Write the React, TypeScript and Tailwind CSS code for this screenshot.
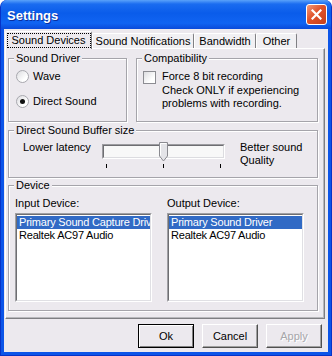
import React from 'react';

const BG = 'bg-[#ECE9EE]';

function Group({ label, className, children }: { label: string; className: string; children?: React.ReactNode }) {
  return (
    <div className={`relative border border-[#A5A4AA] shadow-[inset_1px_1px_0_#fff,1px_1px_0_#fff] ${className}`}>
      <span className={`absolute -top-[7px] left-[5px] px-[2px] leading-[13px] ${BG}`}>{label}</span>
      {children}
    </div>
  );
}

function Radio({ checked }: { checked?: boolean }) {
  return (
    <div className="w-[13px] h-[13px] rounded-full border border-[#A8A8AE] bg-[linear-gradient(135deg,#DCDCE0,#FFFFFF_70%)] flex items-center justify-center">
      {checked && <div className="w-[5px] h-[5px] rounded-full bg-[#111]" />}
    </div>
  );
}

function ListBox({ items }: { items: string[] }) {
  return (
    <div className="w-[137px] h-[89px] border border-t-[#A0A0A4] border-l-[#A0A0A4] border-b-white border-r-white">
      <div className="h-full bg-white border border-t-[#6E6E72] border-l-[#6E6E72] border-b-[#E0E0E4] border-r-[#E0E0E4] pt-[1px] overflow-hidden">
        {items.map((it, i) => (
          <div
            key={it}
            className={`h-[13px] leading-[13px] pl-[2px] whitespace-nowrap tracking-[-0.2px] ${i === 0 ? 'bg-[#316AC5] text-white' : 'text-black'}`}
          >
            {it}
          </div>
        ))}
      </div>
    </div>
  );
}

function Button({ label, focused, disabled }: { label: string; focused?: boolean; disabled?: boolean }) {
  return (
    <div
      className={`w-[56px] h-[24px] flex items-center justify-center border ${BG} ${
        focused
          ? 'border-black shadow-[inset_1px_1px_0_#fff,inset_-1px_-1px_0_#808080]'
          : 'border-t-white border-l-white border-b-[#505050] border-r-[#505050] shadow-[inset_-1px_-1px_0_#A0A0A0]'
      } ${disabled ? 'text-[#A6A6AA] [text-shadow:1px_1px_0_#fff]' : 'text-black'}`}
    >
      {label}
    </div>
  );
}

export default function App() {
  const tabs = [
    { label: 'Sound Notifications', w: 'w-[102px]' },
    { label: 'Bandwidth', w: 'w-[62px]' },
    { label: 'Other', w: 'w-[41px]' },
  ];

  return (
    <div className="w-[332px] h-[356px] bg-white font-['Liberation_Sans',Arial,sans-serif] text-[11px] text-black">
      <div className="w-full h-full rounded-t-[7px] overflow-hidden bg-[#0C55E8] border-x border-b border-[#0733C8] flex flex-col">
        {/* TITLE BAR */}
        <div className="h-[29px] shrink-0 flex items-center justify-between pl-[6px] pr-[4px] bg-[linear-gradient(#5AA2FA_0%,#1A6CF0_14%,#0A5CEA_45%,#1064F2_80%,#0A4ADA_100%)]">
          <span className="text-white font-bold text-[13px] pt-[2px] [text-shadow:1px_1px_0_#0A2F9E]">Settings</span>
          <div className="w-[21px] h-[21px] rounded-[3px] border border-white bg-[linear-gradient(135deg,#F29A78,#E0522A_45%,#C4401C)] flex items-center justify-center">
            <svg width="11" height="11" viewBox="0 0 11 11">
              <path d="M1.5 1.5 L9.5 9.5 M9.5 1.5 L1.5 9.5" stroke="#fff" strokeWidth="2.2" strokeLinecap="square" />
            </svg>
          </div>
        </div>

        {/* BODY */}
        <div className={`mx-[3px] h-[323px] ${BG} flex flex-col`}>
          {/* TABS */}
          <div className="mt-[2px] h-[17px] flex items-end pl-[1px]">
            <div className={`relative z-10 -mb-px h-[18px] w-[87px] flex items-center justify-center border-t border-l border-r border-t-white border-l-white border-r-[#808084] rounded-t-[2px] ${BG}`}>
              <span className="border border-dotted border-black px-[4px] leading-[13px]">Sound Devices</span>
            </div>
            {tabs.map((t) => (
              <div
                key={t.label}
                className={`h-[15px] ${t.w} flex items-center justify-center border-t border-l border-r border-t-white border-l-white border-r-[#808084] rounded-t-[2px] leading-[13px] bg-[#F1F0F3]`}
              >
                {t.label}
              </div>
            ))}
          </div>

          {/* TAB PANEL */}
          <div className="ml-[1px] w-[320px] h-[271px] border border-t-white border-l-white border-b-[#7E7E82] border-r-[#7E7E82] shadow-[inset_-1px_-1px_0_#B8B8BC] pl-[2px] pt-[9px]">
            {/* ROW 1 */}
            <div className="flex gap-[9px]">
              <Group label="Sound Driver" className="w-[119px] h-[64px]">
                <div className="pl-[7px] pt-[11px] flex flex-col gap-[12px]">
                  <div className="flex items-center gap-[4px] h-[13px]">
                    <Radio />
                    <span>Wave</span>
                  </div>
                  <div className="flex items-center gap-[4px] h-[13px]">
                    <Radio checked />
                    <span>Direct Sound</span>
                  </div>
                </div>
              </Group>
              <Group label="Compatibility" className="w-[182px] h-[64px]">
                <div className="pl-[6px] pt-[11px] flex items-start gap-[6px]">
                  <div className="mt-[1px] w-[13px] h-[13px] border border-[#8C8C92] bg-[linear-gradient(135deg,#DCDCE0,#FFFFFF_70%)]" />
                  <div className="leading-[13px]">
                    <div>Force 8 bit recording</div>
                    <div className="mt-[1px]">Check ONLY if experiencing</div>
                    <div>problems with recording.</div>
                  </div>
                </div>
              </Group>
            </div>

            {/* BUFFER */}
            <Group label="Direct Sound Buffer size" className="mt-[8px] w-[310px] h-[48px]">
              <div className="flex items-start pl-[14px] pt-[10px]">
                <div className="w-[79px] leading-[13px]">Lower latency</div>
                <div className="mt-[3px] w-[123px]">
                  <div className="relative h-[15px] border border-t-[#9C9CA0] border-l-[#9C9CA0] border-b-white border-r-white">
                    <div className="h-full bg-[#F8F8F8] border border-t-[#6E6E72] border-l-[#6E6E72] border-b-[#DCDCE0] border-r-[#DCDCE0]" />
                    <svg className="absolute left-[56px] -top-[3px]" width="9" height="20" viewBox="0 0 9 20">
                      <path d="M0.5 0.5 H8.5 V14 L4.5 19 L0.5 14 Z" fill="#E4E4E8" stroke="#8A8A90" />
                      <path d="M1.5 1.5 H7.5" stroke="#fff" />
                      <path d="M1.5 1.5 V13.5" stroke="#fff" />
                    </svg>
                  </div>
                  <div className="mt-[5px] h-[4px] px-[4px] flex justify-between">
                    <div className="w-px h-full bg-black" />
                    <div className="w-px h-full bg-black" />
                    <div className="w-px h-full bg-black" />
                  </div>
                </div>
                <div className="ml-[15px] leading-[13px]">
                  <div>Better sound</div>
                  <div>Quality</div>
                </div>
              </div>
            </Group>

            {/* DEVICE */}
            <Group label="Device" className="mt-[7px] w-[310px] h-[126px]">
              <div className="pl-[6px] pt-[11px] flex gap-[15px]">
                <div>
                  <div className="leading-[13px]">Input Device:</div>
                  <div className="mt-[3px]">
                    <ListBox items={['Primary Sound Capture Driv', 'Realtek AC97 Audio']} />
                  </div>
                </div>
                <div>
                  <div className="leading-[13px]">Output Device:</div>
                  <div className="mt-[3px]">
                    <ListBox items={['Primary Sound Driver', 'Realtek AC97 Audio']} />
                  </div>
                </div>
              </div>
            </Group>
          </div>

          {/* BUTTONS */}
          <div className="mt-[5px] flex justify-end gap-[8px] pr-[6px]">
            <Button label="Ok" focused />
            <Button label="Cancel" />
            <Button label="Apply" disabled />
          </div>
        </div>
      </div>
    </div>
  );
}
